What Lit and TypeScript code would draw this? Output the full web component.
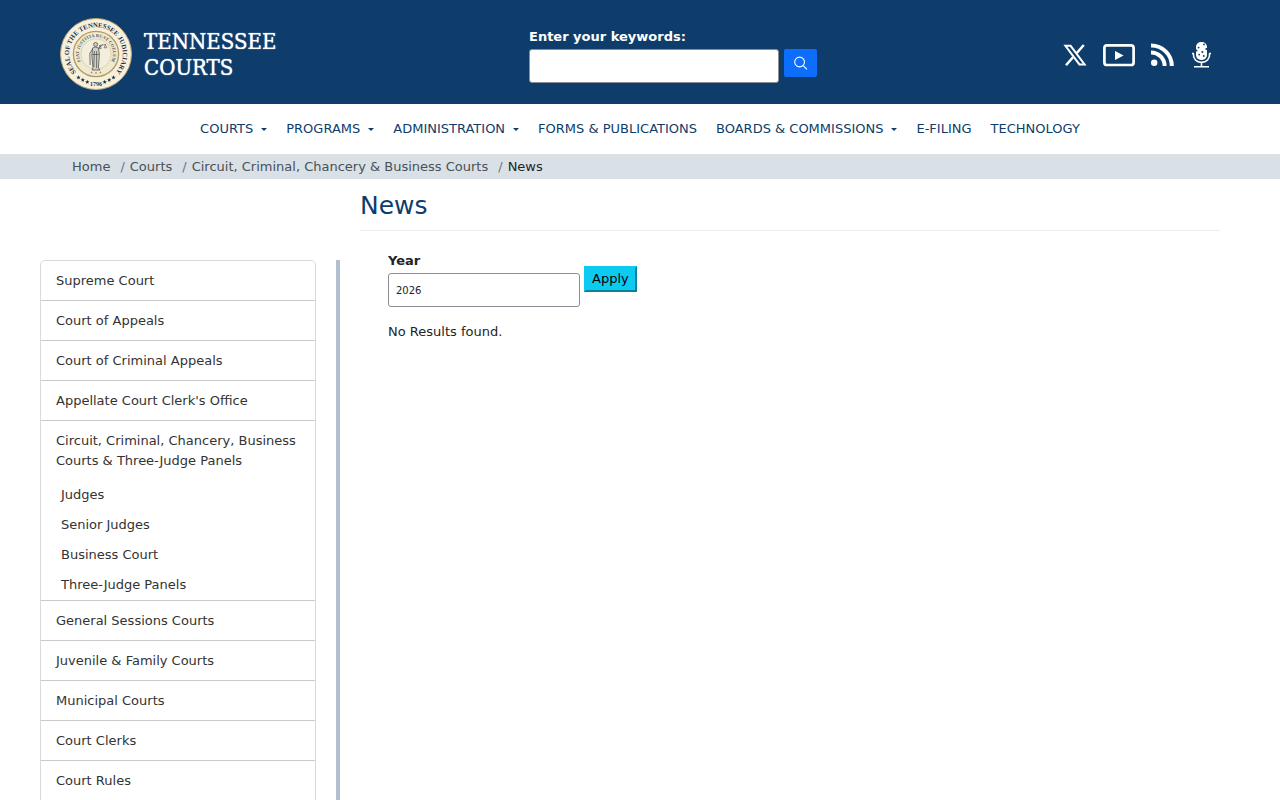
import { LitElement, html, css, svg, nothing } from "lit";
import { customElement } from "lit/decorators.js";

interface NavItem {
  label: string;
  menu?: boolean;
}

interface SideItem {
  label: string;
  children?: string[];
}

const NAV: NavItem[] = [
  { label: "COURTS", menu: true },
  { label: "PROGRAMS", menu: true },
  { label: "ADMINISTRATION", menu: true },
  { label: "FORMS & PUBLICATIONS" },
  { label: "BOARDS & COMMISSIONS", menu: true },
  { label: "E-FILING" },
  { label: "TECHNOLOGY" },
];

const CRUMBS = ["Home", "Courts", "Circuit, Criminal, Chancery & Business Courts"];

const SIDE: SideItem[] = [
  { label: "Supreme Court" },
  { label: "Court of Appeals" },
  { label: "Court of Criminal Appeals" },
  { label: "Appellate Court Clerk's Office" },
  {
    label: "Circuit, Criminal, Chancery, Business Courts & Three-Judge Panels",
    children: ["Judges", "Senior Judges", "Business Court", "Three-Judge Panels"],
  },
  { label: "General Sessions Courts" },
  { label: "Juvenile & Family Courts" },
  { label: "Municipal Courts" },
  { label: "Court Clerks" },
  { label: "Court Rules" },
];

const star = (x: number, y: number, r: number, fill: string) => {
  const pts = Array.from({ length: 10 }, (_, i) => {
    const a = (Math.PI / 5) * i - Math.PI / 2;
    const d = i % 2 ? r * 0.42 : r;
    return `${(x + d * Math.cos(a)).toFixed(2)},${(y + d * Math.sin(a)).toFixed(2)}`;
  });
  return svg`<polygon points=${pts.join(" ")} fill=${fill}></polygon>`;
};

@customElement("court-seal")
export class CourtSeal extends LitElement {
  static styles = css`
    :host { display: block; flex: none; width: 72px; height: 72px; }
    .seal { display: block; width: 100%; height: 100%; }
    .motto { font-family: "Liberation Serif", serif; font-weight: bold; }
  `;

  render() {
    return html`
      <svg class="seal" viewBox="0 0 72 72" role="img" aria-label="Seal of the Tennessee Judiciary">
        <defs>
          <path id="outer" d="M36 62.8 A26.8 26.8 0 0 1 36 9.2 A26.8 26.8 0 0 1 36 62.8"></path>
          <path id="inner" d="M36 53 A17 17 0 0 1 36 19 A17 17 0 0 1 36 53"></path>
        </defs>
        <circle cx="36" cy="36" r="35.5" fill="#f6f0dc" stroke="#bda577" stroke-width="1"></circle>
        <circle cx="36" cy="36" r="22.6" fill="#efe9cf" stroke="#b29a63" stroke-width="1.3"></circle>
        <circle cx="36" cy="36" r="15.2" fill="#f3eedb" stroke="#cfc195" stroke-width=".6"></circle>
        <text class="motto" font-size="6.7" fill="#222c3c" text-anchor="middle">
          <textPath href="#outer" startOffset="50%">SEAL OF THE TENNESSEE JUDICIARY</textPath>
        </text>
        <text class="motto" font-size="4.6" fill="#56544c" text-anchor="middle">
          <textPath href="#inner" startOffset="50%">FIAT JUSTITIA RUAT COELUM</textPath>
        </text>
        <text class="motto" x="36" y="67.5" font-size="6" fill="#222c3c" text-anchor="middle">1796</text>
        ${star(18.5, 59.5, 2.3, "#222c3c")} ${star(22.8, 62, 2.3, "#222c3c")} ${star(27.3, 64, 2.3, "#222c3c")}
        ${star(44.7, 64, 2.3, "#222c3c")} ${star(49.2, 62, 2.3, "#222c3c")} ${star(53.5, 59.5, 2.3, "#222c3c")}
        ${star(31.6, 54.4, 1.3, "#a5894f")} ${star(36, 55, 1.3, "#a5894f")} ${star(40.4, 54.4, 1.3, "#a5894f")}
        <g fill="#d4d1c3" stroke="#4f5356" stroke-width=".8" stroke-linejoin="round">
          <circle cx="35.6" cy="26.5" r="2"></circle>
          <path d="M32.6 30 Q35.6 27.8 38.4 30 L39.4 36 L38.4 50 L40 52 H32 L33 50 L31.8 37 Z"></path>
          <path d="M34.3 33 L33.8 49 M36.7 33 L36.6 50 M32.4 36.5 H38.8" fill="none"></path>
          <path d="M38.2 30.4 L42.4 27 M32.7 31 L29.8 35.5 L30.2 47" fill="none"></path>
          <path d="M39.4 27.4 L46 26.4 M40 27.4 L38.8 30.6 H41.2 Z M45.4 26.6 L44 29.8 H46.8 Z" fill="none" stroke-width=".6"></path>
        </g>
      </svg>
    `;
  }
}

@customElement("app-root")
export class AppRoot extends LitElement {
  static styles = css`
    :host {
      display: block;
      min-height: 100vh;
      background: #fff;
      color: #212529;
      font: 13px/20px "DejaVu Sans", sans-serif;
    }
    * { box-sizing: border-box; }
    ul, ol { list-style: none; margin: 0; padding: 0; }
    a { color: inherit; text-decoration: none; }

    .header {
      display: grid;
      grid-template-columns: 4fr 3fr 3fr;
      min-height: 104px;
      padding: 18px 60px 12px;
      background: #0e3d6b;
      color: #fff;
    }
    .brand {
      display: flex;
      align-items: center;
      align-self: start;
      gap: 12px;
      font: 22px/26px "DejaVu Serif Condensed", "DejaVu Serif", serif;
      text-shadow: 0 0 1px #fff;
    }
    .wordmark { padding-top: 2px; }
    .search { padding: 9px 0 0 5px; }
    .label { display: block; font-weight: bold; }
    .search-row { display: flex; align-items: flex-start; gap: 5px; margin-top: 2px; }
    .field {
      height: 34px;
      padding: 0 7px;
      border: 1px solid #8d8d95;
      border-radius: 3px;
      background: #fff;
      color: #212529;
      font: 10px/16px "DejaVu Sans", sans-serif;
    }
    .keywords { width: 250px; }
    .go {
      display: grid;
      place-items: center;
      width: 33px;
      height: 28px;
      padding: 0;
      border: 0;
      border-radius: 2px;
      background: #0d6efd;
      color: #fff;
    }
    .social {
      display: flex;
      justify-content: flex-end;
      align-items: center;
      align-self: start;
      gap: 16px;
      height: 74px;
      padding-right: 9px;
    }
    .social a { display: block; }
    .icon { display: block; }

    .nav ul {
      display: flex;
      justify-content: center;
      gap: 19px;
      padding: 15px 0;
      color: #0e3d6b;
    }
    .nav a { display: flex; align-items: center; gap: 8px; }
    .caret {
      border: 3px solid transparent;
      border-top-color: currentColor;
      border-bottom: 0;
    }

    .crumbs { padding: 3px 72px 2px; background: #d9e0e6; color: #495057; }
    .crumbs ol { display: flex; }
    .crumbs li + li::before { content: "/"; padding: 0 5px 0 10px; color: #6c757d; }
    .crumbs .current { color: #212529; }

    .page {
      display: grid;
      grid-template-columns: 1fr 3fr;
      margin: 0 40px;
    }
    .side {
      margin-top: 81px;
      padding-right: 20px;
      border-right: 4px solid #b2bdce;
    }
    .menu {
      border: 1px solid #d9dadb;
      border-radius: 5px;
      padding-bottom: 10px;
      color: #333;
    }
    .menu > li { border-bottom: 1px solid #c8cacc; }
    .menu > li:last-child { border-bottom: 0; }
    .entry { display: block; padding: 10px 15px 9px; }
    .sub { padding-left: 20px; }
    .sub a { display: block; padding: 5px 0; }

    .main { padding: 0 20px; }
    .title {
      margin: 0;
      padding: 12px 0 9px;
      border-bottom: 1px solid #ededee;
      color: #0e3d6b;
      font-size: 25px;
      font-weight: normal;
      line-height: 30px;
    }
    .content { padding: 20px 28px; }
    .filter { display: flex; align-items: flex-start; gap: 4px; }
    .year { width: 192px; margin-top: 2px; }
    .apply {
      margin-top: 15px;
      padding: 1px 6px;
      border: 2px outset #0dcaf0;
      background: #0dcaf0;
      color: #000;
      font: inherit;
    }
    .empty { margin: 15px 0 0; }
  `;

  private submit(e: Event) {
    e.preventDefault();
  }

  private renderSide(item: SideItem) {
    return html`<li>
      <a class="entry" href="#">${item.label}</a>
      ${item.children
        ? html`<ul class="sub">${item.children.map((c) => html`<li><a href="#">${c}</a></li>`)}</ul>`
        : nothing}
    </li>`;
  }

  render() {
    return html`
      <header class="header">
        <a class="brand" href="#"><court-seal></court-seal><span class="wordmark">TENNESSEE<br />COURTS</span></a>
        <form class="search" role="search" @submit=${this.submit}>
          <label class="label" for="keywords">Enter your keywords:</label>
          <div class="search-row">
            <input class="field keywords" id="keywords" type="text" />
            <button class="go" type="submit" aria-label="Search">
              <svg class="icon" width="14" height="14" viewBox="0 0 14 14" fill="none" stroke="currentColor" stroke-width="1.1">
                <circle cx="5.6" cy="6" r="4.9"></circle>
                <path d="M9.2 9.6L12.9 13.3"></path>
              </svg>
            </button>
          </div>
        </form>
        <nav class="social" aria-label="Social media">
          <a href="#" aria-label="X">
            <svg class="icon" width="24" height="24" viewBox="0 0 24 24" fill="none" stroke="#fff">
              <path d="M2.4 2.8H7.6L21.6 21.4H16.4Z" stroke-width="2"></path>
              <path d="M20.8 2L13.6 10.2M10.2 14L3 22.2" stroke-width="2.5"></path>
            </svg>
          </a>
          <a href="#" aria-label="YouTube">
            <svg class="icon" width="32" height="24" viewBox="0 0 32 24">
              <rect x="1.4" y="2.4" width="29.2" height="19.6" rx="2.6" fill="none" stroke="#fff" stroke-width="2.7"></rect>
              <path d="M12 8v9l8.6-4.5z" fill="#fff"></path>
            </svg>
          </a>
          <a href="#" aria-label="RSS">
            <svg class="icon" width="24" height="24" viewBox="0 0 24 24" fill="#fff">
              <circle cx="3.2" cy="19.8" r="3.2"></circle>
              <path d="M0 9.4a13.6 13.6 0 0 1 13.6 13.6M0 2.4a20.6 20.6 0 0 1 20.8 20.6" fill="none" stroke="#fff" stroke-width="4"></path>
            </svg>
          </a>
          <a href="#" aria-label="Podcasts">
            <svg class="icon" width="20" height="28" viewBox="0 0 20 28">
              <rect x="5" y="1" width="11" height="18" rx="5" fill="#fff"></rect>
              <g fill="#0e3d6b">
                <circle cx="13" cy="3.4" r=".9"></circle>
                <circle cx="7.6" cy="6.6" r=".9"></circle>
                <circle cx="15.4" cy="8" r="1.1"></circle>
                <circle cx="5.4" cy="9.6" r="1"></circle>
                <circle cx="11.4" cy="11" r="1"></circle>
                <circle cx="8.2" cy="13.6" r=".9"></circle>
                <circle cx="12.8" cy="15" r=".9"></circle>
              </g>
              <path d="M2.4 12.5C2 18 5.5 21.4 10.5 21.4S19 18 18.6 12.5M1 12.5h2M18 12.5h2M10.5 21.4V25M3 25.8h15" fill="none" stroke="#fff" stroke-width="1.6"></path>
            </svg>
          </a>
        </nav>
      </header>

      <nav class="nav" aria-label="Main">
        <ul>
          ${NAV.map(
            (n) => html`<li><a href="#">${n.label}${n.menu ? html`<span class="caret"></span>` : nothing}</a></li>`
          )}
        </ul>
      </nav>

      <nav class="crumbs" aria-label="Breadcrumb">
        <ol>
          ${CRUMBS.map((c) => html`<li><a href="#">${c}</a></li>`)}
          <li class="current" aria-current="page">News</li>
        </ol>
      </nav>

      <div class="page">
        <aside class="side">
          <ul class="menu">${SIDE.map((i) => this.renderSide(i))}</ul>
        </aside>
        <main class="main">
          <h1 class="title">News</h1>
          <div class="content">
            <form class="filter" @submit=${this.submit}>
              <div>
                <label class="label" for="year">Year</label>
                <input class="field year" id="year" type="text" .value=${"2026"} />
              </div>
              <button class="apply" type="submit">Apply</button>
            </form>
            <p class="empty">No Results found.</p>
          </div>
        </main>
      </div>
    `;
  }
}
